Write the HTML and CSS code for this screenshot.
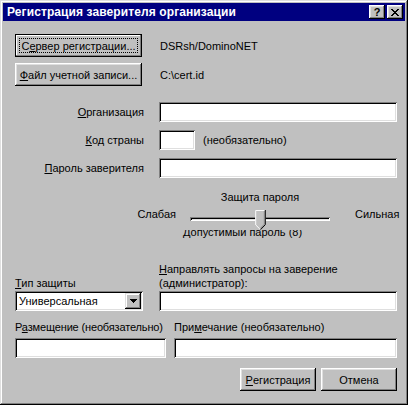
FILE: index.html
```html
<!DOCTYPE html>
<html lang="ru">
<head>
<meta charset="utf-8">
<title>Регистрация заверителя организации</title>
<link rel="stylesheet" href="styles.css">
</head>
<body>
<div class="window">
  <div class="titlebar">
    <span class="title">Регистрация заверителя организации</span>
    <div class="tb-buttons">
      <span class="tb-btn help">?</span>
      <span class="tb-btn">
        <svg width="8" height="7" viewBox="0 0 8 7"><path d="M0 0h2v1H0zM6 0h2v1H6zM1 1h2v1H1zM5 1h2v1H5zM2 2h4v1H2zM3 3h2v1H3zM2 4h4v1H2zM1 5h2v1H1zM5 5h2v1H5zM0 6h2v1H0zM6 6h2v1H6z" fill="#000"/></svg>
      </span>
    </div>
  </div>
  <div class="content">
    <div class="file-row">
      <div class="btn default focused">С<u>е</u>рвер регистрации...</div>
      <span class="value">DSRsh/DominoNET</span>
    </div>
    <div class="file-row second">
      <div class="btn"><u>Ф</u>айл учетной записи...</div>
      <span class="value">C:\cert.id</span>
    </div>

    <div class="form-grid">
      <span class="label"><u>О</u>рганизация</span>
      <div class="field"></div>
      <span class="label"><u>К</u>од страны</span>
      <div class="code-row"><div class="field code"></div><span>(необязательно)</span></div>
      <span class="label"><u>П</u>ароль заверителя</span>
      <div class="field"></div>
    </div>

    <div class="strength">
      <span class="s-title">Защита пароля</span>
      <span class="s-weak">Слабая</span>
      <div class="slider">
        <div class="track"></div>
        <svg class="thumb" width="11" height="21" viewBox="0 0 11 21">
          <polygon points="0,0 11,0 11,15 5.5,21 0,15" fill="#c0c0c0"/>
          <polyline points="0.5,15.5 0.5,0.5 10,0.5" fill="none" stroke="#fff"/>
          <polyline points="0.5,15.5 5.5,20.5" fill="none" stroke="#fff"/>
          <polyline points="10.5,0 10.5,15.3 5.5,20.5" fill="none" stroke="#000"/>
          <polyline points="9.5,1 9.5,14.8 5.3,19.3" fill="none" stroke="#808080"/>
        </svg>
      </div>
      <span class="s-strong">Сильная</span>
      <span class="s-value">Допустимый пароль (8)</span>
    </div>

    <div class="lower-grid">
      <span class="label-top"><u>Т</u>ип защиты</span>
      <span class="label-top"><u>Н</u>аправлять запросы на заверение<br>(администратор):</span>
      <div class="select">
        <span class="select-text">Универсальная</span>
        <span class="drop-btn">
          <svg width="7" height="4" viewBox="0 0 7 4"><path d="M0 0h7v1H0zM1 1h5v1H1zM2 2h3v1H2zM3 3h1v1H3z" fill="#000"/></svg>
        </span>
      </div>
      <div class="field"></div>
    </div>

    <div class="bottom-grid">
      <span class="label-top">Р<u>а</u>змещение (необязательно)</span>
      <span class="label-top">При<u>м</u>ечание (необязательно)</span>
      <div class="field"></div>
      <div class="field"></div>
    </div>

    <div class="actions">
      <div class="btn action"><u>Р</u>егистрация</div>
      <div class="btn action">Отмена</div>
    </div>
  </div>
</div>
</body>
</html>
```

FILE: styles.css
```css
* { box-sizing: border-box; }
html, body { margin: 0; padding: 0; }
body {
  width: 408px;
  height: 405px;
  overflow: hidden;
  background: #c0c0c0;
  font-family: "Liberation Sans", Arial, sans-serif;
  font-size: 11px;
  color: #000;
}
u { text-decoration: underline; text-underline-offset: 1px; }

.window {
  width: 408px;
  height: 405px;
  padding: 3px;
  background: #c0c0c0;
  box-shadow: inset -1px -1px #000, inset 1px 1px #dfdfdf, inset -2px -2px #808080, inset 2px 2px #fff;
  display: flex;
  flex-direction: column;
}

.titlebar {
  height: 18px;
  background: #000080;
  color: #fff;
  display: flex;
  align-items: center;
  justify-content: space-between;
  padding: 0 2px 0 4px;
}
.title { font-weight: bold; font-size: 12px; letter-spacing: 0.1px; }
.tb-buttons { display: flex; gap: 2px; }
.tb-btn {
  width: 16px;
  height: 14px;
  background: #c0c0c0;
  color: #000;
  box-shadow: inset -1px -1px #000, inset 1px 1px #fff, inset -2px -2px #808080, inset 2px 2px #dfdfdf;
  display: flex;
  align-items: center;
  justify-content: center;
}
.tb-btn.help { font-weight: bold; font-size: 11px; line-height: 14px; }

.content {
  padding: 13px 8px 0 12px;
  display: flex;
  flex-direction: column;
}

.btn {
  position: relative;
  height: 23px;
  background: #c0c0c0;
  box-shadow: inset -1px -1px #000, inset 1px 1px #fff, inset -2px -2px #808080, inset 2px 2px #dfdfdf;
  display: flex;
  align-items: center;
  justify-content: center;
  white-space: nowrap;
}
.btn.default {
  box-shadow: inset 0 0 0 1px #000, inset -2px -2px #808080, inset 2px 2px #fff;
}
.btn.focused::after {
  content: "";
  position: absolute;
  inset: 4px;
  border: 1px dotted #000;
}

.file-row {
  display: flex;
  align-items: center;
  gap: 18px;
}
.file-row .btn { width: 127px; }
.file-row.second { margin-top: 6px; }

.form-grid {
  margin-top: 16px;
  display: grid;
  grid-template-columns: 129px 1fr;
  column-gap: 15px;
  row-gap: 8px;
  align-items: center;
}
.label { text-align: right; }

.field {
  height: 20px;
  background: #fff;
  box-shadow: inset 1px 1px #808080, inset -1px -1px #fff, inset 2px 2px #000, inset -2px -2px #dfdfdf;
}
.code-row { display: flex; align-items: center; gap: 8px; }
.field.code { width: 36px; }

.strength {
  margin-top: 13px;
  display: grid;
  grid-template-columns: 168px 154px 1fr;
  grid-template-rows: 13px 23px auto;
  line-height: 13px;
}
.s-title { grid-column: 2; grid-row: 1; text-align: center; }
.s-weak { grid-column: 1; grid-row: 2; text-align: right; padding-right: 7px; margin-top: 4px; }
.s-strong { grid-column: 3; grid-row: 2; padding-left: 18px; margin-top: 4px; }
.slider {
  grid-column: 2;
  grid-row: 2;
  margin-top: 4px;
  height: 22px;
  position: relative;
  z-index: 1;
  background: #c0c0c0;
  display: flex;
  flex-direction: column;
}
.track {
  margin: 9px 7px 0 7px;
  height: 4px;
  background: #c0c0c0;
  box-shadow: inset 1px 1px #808080, inset -1px -1px #fff, inset 2px 2px #000, inset -2px -2px #dfdfdf;
}
.thumb { margin: -11px 0 0 72px; display: block; }
.s-value { grid-column: 2 / 4; grid-row: 3; margin-top: -1px; }

.lower-grid {
  margin-top: 23px;
  display: grid;
  grid-template-columns: 128px 1fr;
  column-gap: 16px;
  row-gap: 1px;
}
.label-top { align-self: end; line-height: 14px; white-space: nowrap; }

.select {
  height: 20px;
  background: #fff;
  box-shadow: inset 1px 1px #808080, inset -1px -1px #fff, inset 2px 2px #000, inset -2px -2px #dfdfdf;
  display: flex;
  align-items: center;
  justify-content: space-between;
  padding: 2px 2px 2px 4px;
}
.drop-btn {
  width: 16px;
  height: 16px;
  background: #c0c0c0;
  box-shadow: inset -1px -1px #000, inset 1px 1px #dfdfdf, inset -2px -2px #808080, inset 2px 2px #fff;
  display: flex;
  align-items: center;
  justify-content: center;
}

.bottom-grid {
  margin-top: 9px;
  display: grid;
  grid-template-columns: 151px 1fr;
  column-gap: 8px;
  row-gap: 4px;
}
.bottom-grid .label-top:first-child { letter-spacing: -0.15px; }

.actions {
  margin-top: 10px;
  display: flex;
  justify-content: flex-end;
  gap: 5px;
}
.btn.action { width: 76px; }
```
